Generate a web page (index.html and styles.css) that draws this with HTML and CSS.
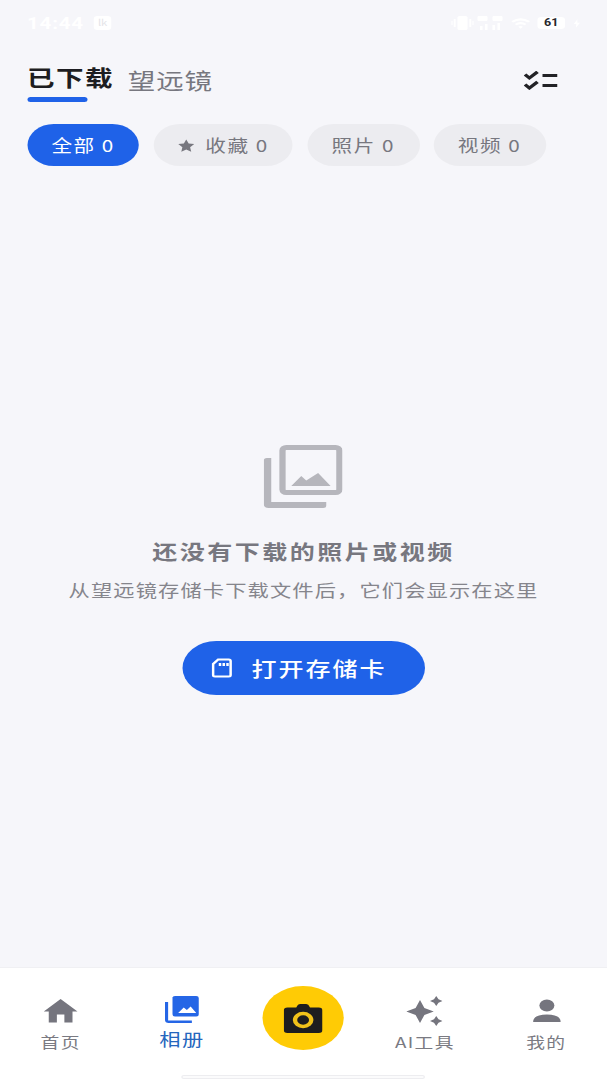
FILE: index.html
```html
<!DOCTYPE html>
<html lang="zh">
<head>
  <meta charset="utf-8">
  <title>相册</title>
  <link rel="stylesheet" href="styles.css">
</head>
<body>
  <div class="app">
    <div class="status">
      <span class="time">14:44</span>
      <span class="status-badge">lk</span>
      <span class="status-right">
        <svg class="st-vibrate" viewBox="0 0 18 14"><rect x="5" y="0" width="8" height="14" rx="1.5"/><rect x="2" y="3" width="1.5" height="8"/><rect x="14.5" y="3" width="1.5" height="8"/><rect y="5" width="1" height="4"/><rect x="17" y="5" width="1" height="4"/></svg>
        <svg class="st-signal" viewBox="0 0 22 16"><rect x="1" y="1" width="8" height="5" rx="1"/><rect x="13" y="1" width="8" height="5" rx="1"/><rect x="3" y="11" width="2" height="4"/><rect x="7" y="9" width="2" height="6"/><rect x="13" y="10" width="2" height="5"/><rect x="17" y="8" width="2" height="7"/></svg>
        <svg class="st-wifi" viewBox="0 0 16 12"><path d="M0 4Q8-2 16 4L14.500 5.500Q8 1 1.500 5.500ZM3 7Q8 3 13 7L11.500 8.500Q8 6 4.500 8.500ZM6 10Q8 8.500 10 10L8 12Z"/></svg>
        <span class="battery">61</span>
        <svg class="st-bolt" viewBox="0 0 6 10"><path d="M3.500 0 0 5.500H2.500L2 10 6 4H3.500Z"/></svg>
      </span>
    </div>

    <div class="tabs">
      <div class="tab tab-active">已下载</div>
      <div class="tab">望远镜</div>
      <svg class="select-icon" viewBox="0 0 27 19">
        <path d="M1 3.500 4.500 7 11 .8M1 13.500 4.500 17 11 10.800" />
        <path d="M15 4.500H27M15 14.500H27" />
      </svg>
    </div>

    <div class="chips">
      <div class="chip chip-active">全部 0</div>
      <div class="chip">
        <svg class="chip-star" viewBox="0 0 24 24"><path d="M12 1.500 15.300 8.500 23 9.500 17.300 14.800 18.800 22.500 12 18.700 5.200 22.500 6.700 14.800 1 9.500 8.700 8.500Z"/></svg>
        收藏 0
      </div>
      <div class="chip">照片 0</div>
      <div class="chip">视频 0</div>
    </div>

    <div class="main">
      <svg class="empty-icon" viewBox="0 0 63 63">
        <path class="empty-back" d="M0 15.500Q0 13 2.500 13H6V57H50V60.500Q50 63 47.500 63H4Q0 63 0 59Z"/>
        <rect class="empty-frame" x="15" y="2.500" width="45.500" height="45" rx="3"/>
        <path class="empty-back" d="M22 41 30 31 34 35.500 43.500 28 53.500 41Z"/>
      </svg>
      <div class="empty-title">还没有下载的照片或视频</div>
      <div class="empty-sub">从望远镜存储卡下载文件后，它们会显示在这里</div>
      <button class="open-btn">
        <svg class="sd-icon" viewBox="0 0 17 20"><path d="M5.500 1.500H14Q15.500 1.500 15.500 3V17Q15.500 18.500 14 18.500H3Q1.500 18.500 1.500 17V6Z"/><path d="M7 5V8M10 5V8M13 5V8"/></svg>
        打开存储卡
      </button>
    </div>

    <div class="nav">
      <div class="nav-row">
        <div class="nav-item">
          <svg class="nav-icon" viewBox="0 0 27 30"><path d="M13.500 3 0 15.500H4V26.500H10.500V18.500H16.500V26.500H23V15.500H27Z"/></svg>
          <span class="nav-label">首页</span>
        </div>
        <div class="nav-item nav-item-active">
          <svg class="nav-icon" viewBox="0 0 27 30"><path d="M6 1.500Q6 0 8 0H25Q27 0 27 2V18Q27 20.500 25 20.500H8Q6 20.500 6 18Z"/><path class="nav-hole" d="M10.500 17 15 11.500 17.500 14 20.500 10.500 25 17Z"/><path d="M0 6H2.500V24.500H21.500V27H3Q0 27 0 24Z"/></svg>
          <span class="nav-label">相册</span>
        </div>
        <div class="nav-item">
          <div class="cam-btn">
            <svg class="cam-icon" viewBox="0 0 31 29"><path d="M10.500 2.500Q11 0 13 0H18Q20 0 20.500 2.500L21 3.500H28Q31 3.500 31 6.500V26Q31 29 28 29H3Q0 29 0 26V6.500Q0 3.500 3 3.500H10Z"/><circle class="cam-ring" cx="15.500" cy="16" r="6.500"/></svg>
          </div>
        </div>
        <div class="nav-item">
          <svg class="nav-icon" viewBox="0 0 29 30"><path d="M11 4 14.500 12 22 15.500 14.500 19 11 27 7.500 19 0 15.500 7.500 12ZM24 0 25.800 3.200 29 5 25.800 6.800 24 10 22.200 6.800 19 5 22.200 3.200ZM24 20 25.800 23.200 29 25 25.800 26.800 24 30 22.200 26.800 19 25 22.200 23.200Z"/></svg>
          <span class="nav-label">AI工具</span>
        </div>
        <div class="nav-item">
          <svg class="nav-icon" viewBox="0 0 27 30"><circle cx="13.500" cy="9.500" r="6"/><path d="M2.500 26Q2.500 18.500 13.500 18.500T24.500 26Z"/></svg>
          <span class="nav-label">我的</span>
        </div>
      </div>
      <div class="home-bar"></div>
    </div>
  </div>
</body>
</html>
```

FILE: styles.css
```css
/* the capture is stretched 1.25x sideways, so the page is laid out at 485.6px and scaled */
html, body { margin: 0; padding: 0; overflow: hidden; background: #f6f6fa; }
body { font-family: "Noto Sans CJK SC", "Noto Sans", sans-serif; }

.app { width: 485.6px; height: 1080px; display: flex; flex-direction: column; transform: scaleX(1.25); transform-origin: 0 0; background: #f6f6fa; }

.status { height: 46px; padding: 0 21.6px; display: flex; align-items: center; color: #fff; flex-shrink: 0; }
.time { font: 700 16.5px "Roboto", sans-serif; letter-spacing: .6px; }
.status-badge { margin-left: 8px; width: 14px; height: 14px; background: #fff; border-radius: 3px; color: #e4e4e8; font-size: 9px; line-height: 14px; text-align: center; }
.status-right { margin-left: auto; display: flex; align-items: center; }
.status-right svg { fill: #fff; }
.st-vibrate { width: 18px; height: 14px; }
.st-signal { width: 22px; height: 16px; margin-left: 2px; }
.st-wifi { width: 15px; height: 12px; margin-left: 6px; }
.battery { width: 22px; height: 12px; margin-left: 6px; background: #fff; border-radius: 3px; color: #26262a; font: 700 10px/12px "Roboto", sans-serif; text-align: center; }
.st-bolt { width: 5px; height: 9px; margin-left: 7px; }

.tabs { display: flex; align-items: flex-start; padding: 18px 40px 0 21.6px; height: 38px; flex-shrink: 0; position: relative; }
.tab { font-size: 22px; line-height: 32px; letter-spacing: .7px; color: #77777f; margin-top: -1px; margin-right: 11px; }
.tab-active { font-weight: 700; letter-spacing: 1.2px; color: #1d1d21; margin-top: -4px; position: relative; }
.tab-active::after { content: ""; position: absolute; left: 0; bottom: -10px; width: 48px; height: 5px; border-radius: 3px; background: #1f62e8; }
.select-icon { width: 27px; height: 19px; margin: 7px 0 0 auto; fill: none; stroke: #222226; stroke-width: 3; }

.chips { display: flex; gap: 11.2px; padding: 22px 21.6px 0; flex-shrink: 0; }
.chip { height: 42px; padding: 0 19.6px; border-radius: 21px; background: #ececf0; color: #77777f; font-size: 16.5px; line-height: 42px; letter-spacing: 1.2px; display: flex; align-items: center; white-space: nowrap; }
.chip-active { background: #1f62e8; color: #fff; }
.chip-star { width: 14px; height: 15px; margin-right: 8px; fill: #77777f; }

.main { flex: 1; display: flex; flex-direction: column; align-items: center; padding-top: 279px; }
.empty-icon { width: 63px; height: 63px; }
.empty-back { fill: #b6b6bc; }
.empty-frame { fill: none; stroke: #b6b6bc; stroke-width: 5; }
.empty-title { margin-top: 29px; font-size: 20px; line-height: 30px; font-weight: 700; letter-spacing: 2px; color: #77777f; white-space: nowrap; }
.empty-sub { margin-top: 11px; font-size: 17px; line-height: 24px; letter-spacing: .9px; color: #85858c; white-space: nowrap; }
.open-btn { margin-top: 39px; width: 194.4px; height: 54px; border: 0; border-radius: 27px; background: #1f62e8; color: #fff; font: 500 20px "Noto Sans CJK SC", sans-serif; letter-spacing: 1.6px; display: flex; align-items: center; justify-content: center; padding: 0 7px 0 0; }
.sd-icon { width: 17px; height: 20px; margin-right: 15px; fill: none; stroke: #fff; stroke-width: 2; }

.nav { height: 112px; background: #fff; flex-shrink: 0; display: flex; flex-direction: column; align-items: center; box-shadow: 0 -1px 0 #f0f0f3; }
.nav-row { width: 100%; height: 107px; display: grid; grid-template-columns: repeat(5, 1fr); }
.nav-item { display: flex; flex-direction: column; align-items: center; padding-top: 28px; fill: #75757e; color: #7a7a82; }
.nav-item-active { fill: #2566e6; color: #2566bd; }
.nav-icon { width: 29px; height: 30px; }
.nav-label { margin-top: 6px; font-size: 15px; line-height: 20px; letter-spacing: 1.1px; white-space: nowrap; }
.nav-item-active .nav-label { font-size: 17px; margin-top: 3px; letter-spacing: 1.2px; }
.nav-hole { fill: #fff; }
.cam-btn { margin-top: -10px; width: 64.8px; height: 64px; border-radius: 50%; background: #ffcb05; display: flex; align-items: center; justify-content: center; }
.cam-icon { width: 31px; height: 29px; fill: #1d1d1f; }
.cam-ring { fill: none; stroke: #f1c21a; stroke-width: 3.5; }
.home-bar { width: 195px; height: 4px; box-sizing: border-box; border: 1px solid #ededf0; border-radius: 2px; background: #fbfbfc; }
```
